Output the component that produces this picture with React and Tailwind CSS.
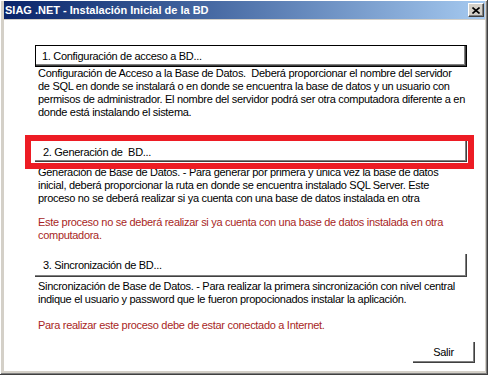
import React from "react";

const body = { fontFamily: '"Liberation Sans", Arial, sans-serif' };

function Line({ children }) {
  return <div className="whitespace-pre h-[13px] leading-[13px]">{children}</div>;
}

export default function App() {
  return (
    <div className="w-[488px] h-[375px] bg-[#d4d0c8] border-r border-b border-[#404040] overflow-hidden" style={body}>
      <div className="w-full h-full border-l border-t border-white flex flex-col shadow-[inset_-1px_-1px_0_#808080] pl-[3px] pr-[2px] pb-[3px]">
        {/* Title bar */}
        <div className="h-[18px] flex items-center bg-gradient-to-r from-[#0a246a] to-[#a6caf0] pl-[1px] pr-[1px]">
          <span className="text-white font-bold text-[11px] leading-none whitespace-pre" style={body}>
            SIAG .NET - Instalación Inicial de la BD
          </span>
          <div className="ml-auto w-[16px] h-[14px] bg-[#d4d0c8] border-t border-l border-white border-r border-b border-r-[#404040] border-b-[#404040] shadow-[inset_-1px_-1px_0_#808080] flex items-center justify-center">
            <svg width="8" height="7" viewBox="0 0 8 7">
              <path d="M0.5 0.5 L7.5 6.5 M7.5 0.5 L0.5 6.5" stroke="#000" strokeWidth="1.6" />
            </svg>
          </div>
        </div>
        <div className="h-[1px]" />
        {/* Client area */}
        <div className="flex-1 bg-white flex flex-col pl-[31px] pr-[18px] text-[11px] tracking-[-0.3px] text-black relative">
          {/* Button 1 (default) */}
          <div className="mt-[25px] h-[22px] border border-black shadow-[inset_-1px_-1px_0_#404040,inset_-2px_-2px_0_#808080] flex items-center pl-[6px]">
            <span className="whitespace-pre leading-none">1. Configuración de acceso a BD...</span>
          </div>
          <div className="pl-[3px]">
            <Line>Configuración de Acceso a la Base de Datos.  Deberá proporcionar el nombre del servidor</Line>
            <Line>de SQL en donde se instalará o en donde se encuentra la base de datos y un usuario con</Line>
            <Line>permisos de administrador. El nombre del servidor podrá ser otra computadora diferente a en</Line>
            <Line>donde está instalando el sistema.</Line>
          </div>

          {/* Button 2 */}
          <div className="mt-[20px] h-[23px] border-r border-b border-[#404040] shadow-[inset_-1px_-1px_0_#808080] flex items-center pl-[8px] pt-[4px]">
            <span className="whitespace-pre leading-none">2. Generación de  BD...</span>
          </div>
          <div className="pl-[3px] mt-[4px]">
            <Line>Generación de Base de Datos. - Para generar por primera y única vez la base de datos</Line>
            <Line>inicial, deberá proporcionar la ruta en donde se encuentra instalado SQL Server. Este</Line>
            <Line>proceso no se deberá realizar si ya cuenta con una base de datos instalada en otra</Line>
          </div>
          <div className="pl-[3px] mt-[11px] text-[#a81f25]">
            <Line>Este proceso no se deberá realizar si ya cuenta con una base de datos instalada en otra</Line>
            <Line>computadora.</Line>
          </div>

          {/* Button 3 */}
          <div className="mt-[12px] h-[23px] border-r border-b border-[#404040] shadow-[inset_-1px_-1px_0_#808080] flex items-center pl-[8px]">
            <span className="whitespace-pre leading-none">3. Sincronización de BD...</span>
          </div>
          <div className="pl-[3px] mt-[3px]">
            <Line>Sincronización de Base de Datos. - Para realizar la primera sincronización con nivel central</Line>
            <Line>indique el usuario y password que le fueron propocionados instalar la aplicación.</Line>
          </div>
          <div className="pl-[3px] mt-[13px] text-[#a81f25]">
            <Line>Para realizar este proceso debe de estar conectado a Internet.</Line>
          </div>

          <div className="flex-1" />
          <div className="flex justify-end mb-[8px] mr-[-8px]">
            <div className="w-[62px] h-[21px] border-r border-b border-[#404040] shadow-[inset_-1px_-1px_0_#808080] flex items-center justify-center">
              <span className="leading-none">Salir</span>
            </div>
          </div>

          {/* Red annotation */}
          <div className="absolute left-[21px] top-[115px] w-[449px] h-[34px] border-[6px] border-[#ed1c24] pointer-events-none" />
        </div>
      </div>
    </div>
  );
}
